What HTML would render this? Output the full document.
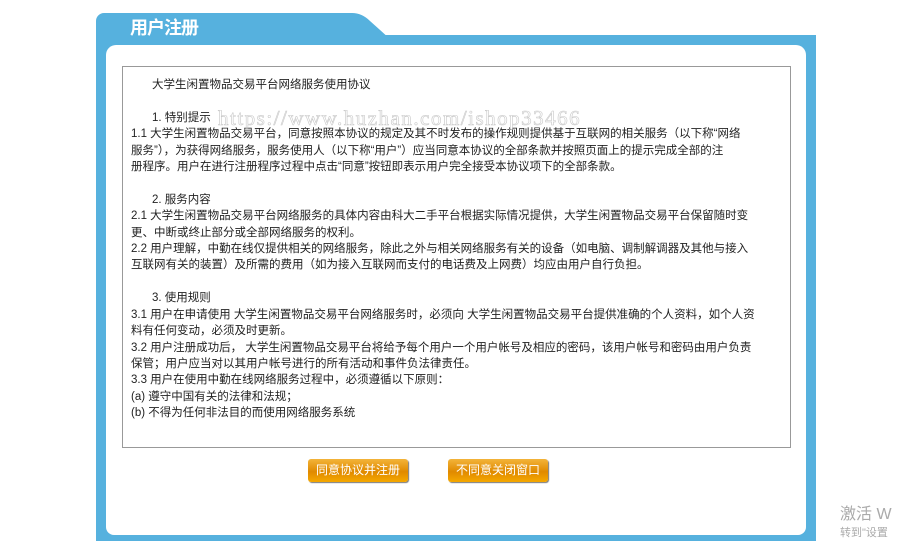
<!DOCTYPE html>
<html><head><meta charset="utf-8"><style>
body{margin:0;width:900px;height:541px;background:#fff;position:relative;overflow:hidden;font-family:"Liberation Sans","Noto Sans CJK SC",sans-serif}
.frame{position:absolute;left:96px;top:35px;width:720px;height:506px;background:#56b1de;border-radius:8px 0 0 0}
.tab{position:absolute;left:96px;top:13px;width:260px;height:30px;background:#56b1de;border-radius:8px 14px 0 0}
.inner{position:absolute;left:106px;top:45px;width:700px;height:490px;background:#fff;border-radius:10px 10px 8px 8px}
.title{position:absolute;left:130px;top:14px;color:#fff;font-size:18px;font-weight:bold;letter-spacing:-1px}
.box{position:absolute;left:122px;top:66px;width:667px;height:380px;border:1px solid #999;background:#fff}
.txt{position:absolute;left:131px;top:77px;font-size:11.5px;line-height:16.4px;color:#222;white-space:pre}
.i{display:inline-block;width:21px}
.btn{position:absolute;top:459px;height:23px;width:100px;border-radius:3px;background:linear-gradient(#f3b43a,#e08a00 55%,#f5a800);color:#fff;font-size:12px;text-align:center;line-height:23px;box-shadow:1px 1px 1px #777}
.wm{position:absolute;left:218px;top:106px;font-family:"Liberation Serif",serif;font-size:21px;color:transparent;-webkit-text-stroke:0.6px #c8c8c8;letter-spacing:1.5px}
.act{position:absolute;left:840px;top:500px;color:#aaa;font-size:16px}
.act2{position:absolute;left:840px;top:524px;color:#aaa;font-size:11px}
</style></head><body>
<div class="tab"></div>
<svg style="position:absolute;left:340px;top:13px" width="60" height="32"><path d="M0 0 L12 0 Q22 0 30 8 L50 26 L60 32 L0 32Z" fill="#56b1de"/></svg>
<div class="frame"></div>
<div class="title">用户注册</div>
<div class="inner"></div>
<div class="box"></div>
<div class="txt"><span class="i"></span>大学生闲置物品交易平台网络服务使用协议

<span class="i"></span>1. 特别提示
1.1 大学生闲置物品交易平台，同意按照本协议的规定及其不时发布的操作规则提供基于互联网的相关服务（以下称“网络
服务”），为获得网络服务，服务使用人（以下称“用户”）应当同意本协议的全部条款并按照页面上的提示完成全部的注
册程序。用户在进行注册程序过程中点击“同意”按钮即表示用户完全接受本协议项下的全部条款。

<span class="i"></span>2. 服务内容
2.1 大学生闲置物品交易平台网络服务的具体内容由科大二手平台根据实际情况提供，大学生闲置物品交易平台保留随时变
更、中断或终止部分或全部网络服务的权利。
2.2 用户理解，中勤在线仅提供相关的网络服务，除此之外与相关网络服务有关的设备（如电脑、调制解调器及其他与接入
互联网有关的装置）及所需的费用（如为接入互联网而支付的电话费及上网费）均应由用户自行负担。

<span class="i"></span>3. 使用规则
3.1 用户在申请使用 大学生闲置物品交易平台网络服务时，必须向 大学生闲置物品交易平台提供准确的个人资料，如个人资
料有任何变动，必须及时更新。
3.2 用户注册成功后， 大学生闲置物品交易平台将给予每个用户一个用户帐号及相应的密码，该用户帐号和密码由用户负责
保管；用户应当对以其用户帐号进行的所有活动和事件负法律责任。
3.3 用户在使用中勤在线网络服务过程中，必须遵循以下原则：
(a) 遵守中国有关的法律和法规；
(b) 不得为任何非法目的而使用网络服务系统</div>
<div class="wm">https://www.huzhan.com/ishop33466</div>
<div class="btn" style="left:308px">同意协议并注册</div>
<div class="btn" style="left:448px">不同意关闭窗口</div>
<div class="act">激活 W</div>
<div class="act2">转到"设置</div>
</body></html>
